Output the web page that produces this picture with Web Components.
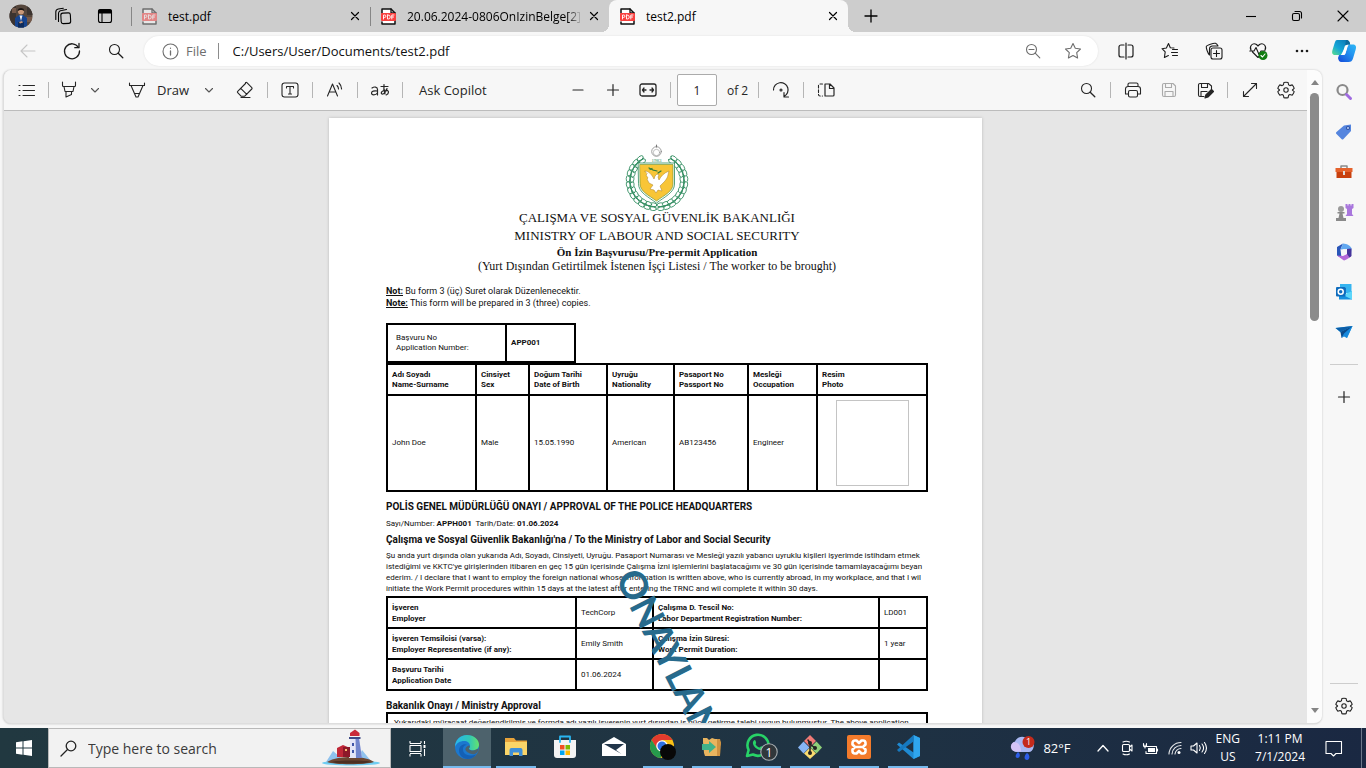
<!DOCTYPE html>
<html lang="en">
<head>
<meta charset="utf-8">
<title>test2.pdf</title>
<style>
  html, body { margin: 0; height: 100%; overflow: hidden; }
  body { font-family: "Open Sans", "Noto Sans", sans-serif; font-size: 12px; color: #1b1b1b; background: #f7f7f7; }
</style>
</head>
<body>
<browser-desktop></browser-desktop>
<script>
const S = (w, h, body, extra = '') => `<svg width="${w}" height="${h}" viewBox="0 0 ${w} ${h}" fill="none" stroke="currentColor" stroke-width="1.1" stroke-linecap="round" stroke-linejoin="round" aria-hidden="true" ${extra}>${body}</svg>`;

// Pairs of leaves along both sides of the emblem's wreath, from the bottom up.
const wreath = () => {
  let out = '';
  for (let i = 0; i < 12; i++) {
    for (const side of [-1, 1]) {
      const deg = 8 + i * 12.4;
      const t = Math.PI / 180 * deg;
      const x = 32 + side * 27 * Math.sin(t);
      const y = 37 + 26 * Math.cos(t);
      out += `<g transform="translate(${x.toFixed(1)} ${y.toFixed(1)}) rotate(${(-side * deg).toFixed(0)})"><ellipse cx="0" cy="-2" rx="3.500" ry="1.900" fill="#fff"/><ellipse cx="0" cy="2" rx="3.500" ry="1.900" fill="#fff"/><path d="M-3 0H3"/></g>`;
    }
  }
  return out;
};

const gear = '<path d="M9 1.2c.8 0 1.500.1 2.100.3l.5 2.300 1.300.8 2.300-.7c.9 1 1.600 2.200 2 3.500L15.400 9l0 .2 1.800 1.500c-.4 1.300-1.100 2.500-2 3.500l-2.300-.7-1.300.8-.5 2.300c-1.400.4-2.800.4-4.200 0l-.5-2.300-1.300-.8-2.300.7c-.9-1-1.600-2.200-2-3.500L2.600 9 .8 7.400c.4-1.300 1.100-2.500 2-3.500l2.300.7 1.300-.8.5-2.300C7.500 1.300 8.200 1.200 9 1.200z"/><circle cx="9" cy="9" r="2.200"/>';
const pdf = '<path d="M1 5V1h9l4 4v11H1v-2" fill="#fff" stroke="#111" stroke-width="1.500"/><path d="M10 1v4h4" stroke="#111" stroke-width="1.300"/><rect x="0" y="5" width="15" height="8" rx="1" fill="#f8403f" stroke="none"/><path d="M2.500 11V7h1.200a1.100 1.100 0 0 1 0 2.400H2.500M6.500 7v4h.8a2 2 0 0 0 0-4zM10.800 11V7h2.200M10.800 9h1.800" stroke="#fff" stroke-width=".9"/>';

const ICONS = {
  avatar: S(24, 24, '<defs><clipPath id="c"><circle cx="12" cy="12" r="11.500"/></clipPath></defs><g clip-path="url(#c)" stroke="none"><path fill="#55463c" d="M0 0h24v24H0z"/><path fill="#3c3430" d="M0 0h7v24H0zM18 2h6v9h-6z"/><path fill="#75594a" d="M3 4h4v5H3zM17 13h6v5h-6z"/><path fill="#16448f" d="M6 24V14l4-3h4l4 3v10z"/><path fill="#0d2b5c" d="M9 18h6v6H9z"/><path fill="#e8eef7" d="M10.500 11.500h3L12 17z"/><circle cx="12" cy="7.500" r="3" fill="#c99878"/><path fill="#1a1513" d="M8.800 7C8 3 16 3 15.200 7c-1.500-1.500-5-1.500-6.400 0z"/><path fill="#c99878" d="M10 18l3-1 1 1.500-3 1z"/></g>'),
  workspaces: S(18, 18, '<rect x="7" y="6" width="9.500" height="10.500" rx="2" transform="rotate(-3 12 11)"/><path d="M4.500 14.500V6.500a3 3 0 0 1 3-3l5-1M1.800 12.500V5a3 3 0 0 1 2.500-3l5-.8"/>'),
  tabActions: S(16, 16, '<rect x="1.500" y="1.500" width="13" height="13" rx="2"/><path d="M2 2h12v3H2z" fill="currentColor"/><path d="M5 5v9"/>'),
  pdf: S(15, 17, pdf),
  pdfDim: S(15, 17, pdf, 'opacity=".5"'),
  x: S(10, 10, '<path d="M1.500 1.500l7 7M8.500 1.500l-7 7" stroke-width="1.200"/>'),
  plus: S(14, 14, '<path d="M7 1v12M1 7h12" stroke-width="1.300"/>'),
  plusSmall: S(12, 12, '<path d="M6 .5v11M.5 6h11" stroke-width="1.200"/>'),
  minus: S(12, 12, '<path d="M1 6h10" stroke-width="1.200"/>'),
  winMin: S(10, 10, '<path d="M0 5.500h10" stroke-linecap="butt"/>'),
  winRestore: S(10, 10, '<rect x=".5" y="2.500" width="7" height="7" rx="1.500"/><path d="M3 .5h4.500a2 2 0 0 1 2 2V7"/>'),
  winClose: S(10, 10, '<path d="M0 0l10 10M10 0L0 10"/>'),
  back: S(16, 14, '<path d="M15 7H1M7 1L1 7l6 6"/>'),
  refresh: S(18, 18, '<path d="M15.500 5.500A7.500 7.500 0 1 0 16.500 9" stroke-width="1.300"/><path d="M16 1.500v4.200h-4.200" stroke-width="1.300"/>'),
  search: S(16, 16, '<circle cx="6.500" cy="6.500" r="5"/><path d="M10.200 10.200l4.600 4.600" stroke-width="1.300"/>'),
  info: S(17, 17, '<circle cx="8.500" cy="8.500" r="7.500"/><path d="M8.500 8v4M8.500 5.200v.1" stroke-width="1.300"/>'),
  zoomOut: S(16, 16, '<circle cx="6.500" cy="6.500" r="5"/><path d="M10.200 10.200l4.600 4.600M4 6.500h5"/>'),
  star: S(18, 18, '<path d="M9 1.500l2.300 4.800 5.200.7-3.800 3.700.9 5.300L9 13.500 4.400 16l.9-5.300L1.500 7l5.200-.7z"/>'),
  split: S(18, 18, '<path d="M7 3H4a2 2 0 0 0-2 2v8a2 2 0 0 0 2 2h3M11 3h3a2 2 0 0 1 2 2v8a2 2 0 0 1-2 2h-3M9 1v16" stroke-width="1.200"/>'),
  favorites: S(18, 18, '<path d="M13 6l-3.700-.3L7.500 1.500 5.400 6 1 6.700l3.200 3.200-.8 5.600 4-2M11.500 7.500h5M10.500 10.500h6M11.500 13.500h5"/>'),
  collections: S(18, 18, '<rect x="6" y="6" width="11" height="11" rx="2"/><path d="M11.500 8.500v6M8.500 11.500h6M4.500 13C2.800 11.500 1 6 1.300 4.500S9 .8 10.500 1.300 12.500 3 13 4M4.500 13V7a3 3 0 0 1 3-3H13"/>'),
  essentials: S(19, 18, '<path d="M2 8C0 4.500 3.500 0 7.500 2.500L9 4l1.500-1.500C14.500 0 18 4.500 16 8M3.500 10L9 15.500l2-2M.8 9H5l2-3.500 3 7L12 9h4"/><circle cx="14" cy="13.500" r="4.500" fill="#107c10" stroke="none"/><path d="M12 13.500l1.500 1.500 2.500-3" stroke="#fff"/>'),
  dots: S(14, 4, '<g fill="currentColor" stroke="none"><circle cx="2" cy="2" r="1.300"/><circle cx="7" cy="2" r="1.300"/><circle cx="12" cy="2" r="1.300"/></g>'),
  copilot: S(24, 24, '<defs><linearGradient id="a" x1="0" y1="1" x2="1" y2="0"><stop stop-color="#5ee08a"/><stop offset=".4" stop-color="#14a6d8"/><stop offset="1" stop-color="#0a6fae"/></linearGradient><linearGradient id="b" x1="0" y1="1" x2="1" y2="0"><stop stop-color="#1447d8"/><stop offset=".6" stop-color="#2394f0"/><stop offset="1" stop-color="#2fb9f5"/></linearGradient></defs><g stroke="none"><path fill="url(#b)" d="M7 16h4c1.500 0 2.300-1 2.800-2.500L15.500 8c.5-1.700 1.300-2.500 3-2.500H21c3 0 3.500 2.500 2.700 5l-2.700 9c-.7 2.500-2 3.500-4.500 3.500H9.500C7 23 6.500 21 6 19z"/><path fill="url(#a)" d="M5 1h9c3 0 3.500 1.500 4.200 4.500h-2.700c-1.500 0-2.500.7-3 2.500l-1.700 6c-.5 1.500-1.300 2-2.800 2H3c-3 0-3.300-2.500-2.500-5l2-6.500C3.200 2 4 1 5 1z"/><path fill="#0b6a9d" d="M14 1c3 0 3.500 1.500 4.200 4.500h-2.700l-2.300 1z"/><path fill="#fff" d="M14 6.500h1.600l-2.400 8.400c-.3.800-1 1.100-1.800 1.100H9z"/></g>'),
  list: S(17, 13, '<path d="M5 1.500h11.500M5 6.500h11.500M5 11.500h11.500M1 1.500h1M1 6.500h1M1 11.500h1"/>'),
  highlighter: S(16, 18, '<path d="M1.500 1v3.500a1 1 0 0 0 1 1h11a1 1 0 0 0 1-1V1M3 5.500l1 5h8l1-5M5 10.500V16l5.500-2.500v-3"/>'),
  pen: S(18, 18, '<path d="M1.500 2v2.500h15V2M3 4.500L8 16h2l5-11.500M6.500 12.500h5"/>'),
  chevron: S(10, 10, '<path d="M1.500 3.500L5 7l3.500-3.500" stroke="#555"/>'),
  eraser: S(18, 18, '<path d="M9.500 2.500l-7.800 7.800a1 1 0 0 0 0 1.400l3.600 3.600h3.200l7.300-7.300a1 1 0 0 0 0-1.400l-4.900-4.900a1 1 0 0 0-1.400 0zM4.700 7.300l6.100 6.100M5 16.500h9"/>'),
  textBox: S(18, 16, '<rect x="1" y="1" width="16" height="14" rx="2.500"/><path d="M5.500 6V4.500h7V6M9 4.500v7.500M7.500 12h3"/>'),
  readAloud: S(18, 16, '<path d="M1.500 14L6.500 2l5 12M3.200 10h6.600M11 3.500c1 1 1.500 2 1.500 3.500M13 1c1.800 1.800 2.600 3.500 2.600 6"/>'),
  translate: S(20, 16, '<path d="M2 6c2-1.500 5.500-1.500 5.500 1.500V13M7.500 9C4 8.500 1.500 9 1.500 11c0 2.500 4 2.500 6 0M11 4.500h7M14 2.500c-.5 4 0 7 1 9.500M17 6.500c-1 4-3.500 6-5 5.500-2-1 .5-4 4-4 3.500.5 3 4 .2 5" stroke-width="1.200"/>'),
  fit: S(18, 14, '<rect x="1" y="1" width="16" height="12" rx="2" stroke-width="1.300"/><path d="M7 7H3.500M11 7h3.500M5 5L3.500 7 5 9M13 5l1.500 2L13 9" stroke-width="1.300"/>'),
  rotate: S(18, 18, '<path d="M1.500 9A7.300 7.300 0 1 1 12 15.500M12 11.500v4.500h4.500" stroke-width="1.200"/><circle cx="9" cy="9" r="1"/>'),
  pages: S(18, 14, '<path d="M8 1v12M8 1h5l4 4v7a1 1 0 0 1-1 1H8M12.500 1v4.500H17" stroke-width="1.200"/><path d="M5.500 1H3a1.500 1.500 0 0 0-1.500 1.500v9A1.500 1.500 0 0 0 3 13h2.500" stroke-dasharray="2.500 2"/>'),
  print: S(18, 16, '<path d="M4 4.500v-2A1.500 1.500 0 0 1 5.500 1h7A1.500 1.500 0 0 1 14 2.500v2M4 12H1.500V7A2.500 2.500 0 0 1 4 4.500h10A2.500 2.500 0 0 1 16.500 7v5H14"/><rect x="4.500" y="8.500" width="9" height="6.500" rx="1.500"/>'),
  save: S(16, 16, '<path d="M1.500 3A1.500 1.500 0 0 1 3 1.500h9L14.500 4v9a1.500 1.500 0 0 1-1.500 1.500H3A1.500 1.500 0 0 1 1.500 13zM4.500 1.500v4h6v-4M4 14.500v-5h8v5"/>'),
  saveAs: S(17, 17, '<path d="M7 14.500H3A1.500 1.500 0 0 1 1.500 13V3A1.500 1.500 0 0 1 3 1.500h8.500L14.500 4v4M4.500 1.500v4h6v-4M4 14.500v-5h6"/><path d="M14.500 7.500l2 2-5.500 5.500-3 1 .8-3z" fill="currentColor"/>'),
  expand: S(16, 16, '<path d="M1.500 14.500l13-13M9.500 1.500h5v5M1.500 9.500v5h5"/>'),
  gear: S(18, 18, gear),
  sideSearch: S(18, 18, '<circle cx="7.500" cy="7" r="5" stroke="#8a8a8a" stroke-width="2.200"/><path d="M11.500 11.500l4 4" stroke="#a06be0" stroke-width="3"/>'),
  tag: S(18, 18, '<path d="M9 2.500L16 1.500v6.500L8.500 16c-.7.700-1.300.7-2 0L1.500 11c-.7-.7-.7-1.300 0-2z" fill="#5585de" stroke="none"/><circle cx="13" cy="5" r="1.500" fill="#c8dcff" stroke="#2a4fa5"/>'),
  tools: S(18, 16, '<path d="M6 4V2h6v2" stroke="#8a8a8a" stroke-width="1.500"/><path fill="#e5622c" stroke="none" d="M.5 4h17v4H.5z"/><path fill="#c8400e" stroke="none" d="M1.500 8h15v6h-15z"/><path fill="#ddd" stroke="none" d="M8 7h2v4H8z"/>'),
  games: S(19, 19, '<g stroke="none"><path fill="#a977dd" d="M10.500 1h2v1.500h1V1h2v1.500h1V1h2v4l-1.500 1v5l1.500 2h-8l1.500-2V6l-1.500-1z"/><circle cx="6" cy="6" r="3" fill="#9a9a9a"/><path fill="#8a8a8a" d="M2.500 9h7v1.500h-2L8.500 15H11v3H1v-3h2.500l1-4.500h-2z"/></g>'),
  m365: S(18, 18, '<g stroke="none"><path fill="#2a56b8" d="M8 .5L2 4v8.500L6.500 15 5.500 6.500z"/><path fill="#62a8f0" d="M8 .5c4 0 8.500 3 8.500 5L16 10l-4-4-6.500.5z"/><path fill="#b468d8" d="M2 12.500l6.500 4.800c1.500.5 4-1.300 7.500-3.800V6l-4 0v5l-4 2z"/><path fill="#45349b" d="M16.500 5.500V13l-2 1.500L12 11V6z"/><path fill="#f7f7f7" d="M9 6l3 1.600v3L9 12.300l-3-1.600v-3z"/></g>'),
  outlook: S(18, 18, '<g stroke="none"><path fill="#35b4f0" d="M5 1h11.500v9H5z"/><path fill="#1470c4" d="M5 5h6v6H5z"/><path fill="#1490df" d="M4 16.500h13V8l-6.500 4L4 9z"/><path fill="#5cd6fa" d="M17 8v8.500L8 12z"/><rect x="1" y="4" width="9.500" height="9.500" rx="1" fill="#0f6cbd"/></g><circle cx="5.700" cy="8.700" r="2.500" stroke="#fff" stroke-width="1.500"/>'),
  plane: S(18, 16, '<g stroke="none"><path fill="#2aa5ec" d="M.5 4L17.500 2 12 14z"/><path fill="#0c5ea8" d="M.5 4l17-2L5.500 8z"/><path fill="#0a4a8c" d="M5.500 8L17.500 2 6.500 14z"/><path fill="#1688dc" d="M6.500 14l2.500-4.500L17.500 2 12 14l-3-1.500z"/></g>'),
  start: S(16, 16, '<path fill="#fff" stroke="none" d="M0 2.300l6.500-1v6.300H0zM7.500 1.200L16 0v7.600H7.500zM0 8.500h6.500v6.300L0 13.800zM7.500 8.500H16V16l-8.500-1.200z"/>'),
  winSearch: S(17, 17, '<circle cx="11" cy="6" r="4.800" stroke-width="1.300"/><path d="M7.500 9.500L1 16" stroke-width="1.300"/>'),
  lighthouse: S(60, 38, '<g stroke="none"><ellipse cx="30" cy="34" rx="29" ry="2.500" fill="#6fcdf2"/><path fill="#8fc2ee" d="M5 33l7-11 7 6 3 5zM37 30l4-9 9 11z"/><path fill="#6b4632" d="M6 33c6-4 16-5 24-5s18 1 23 5c-8 3-40 3-47 0z"/><path fill="#4c3023" d="M10 33c8-2 35-2 40 0-8 2-32 2-40 0z"/><path fill="#e4e6f8" d="M29.500 9h8.500l3 20H28z"/><path fill="#7185cd" d="M34.500 9H38l3 20h-6z"/><path fill="#3f55a8" d="M31 14h2v3h-2zM31 21h2v3h-2z"/><path fill="#c92b39" d="M29 4l5-3.500L38.500 4v3H29z"/><path fill="#3e4a86" d="M28 8h11.500v2H28z"/><path fill="#c02737" d="M16 19l6-3 7 3v9H16z"/><path fill="#8d1829" d="M22 18h7v10h-7z"/><path fill="#ffc070" d="M24 20h2v2h-2z"/></g>'),
  taskView: S(17, 17, '<path d="M1 3.500V1M12 1v2M1 3.500h11M1 14v2.500M12 14v2.500M1 13.500h11M1 5.500h11v6H1zM15.500 1v3M15.500 9v7" stroke-linecap="butt"/><rect x="14.500" y="5" width="2" height="3" fill="#fff" stroke="none"/>'),
  edge: S(24, 24, '<defs><linearGradient id="a" x1="0" x2="1"><stop stop-color="#28b7ee"/><stop offset=".6" stop-color="#31c7b6"/><stop offset="1" stop-color="#66e36b"/></linearGradient></defs><g stroke="none"><circle cx="12" cy="12" r="12" fill="#1b78cf"/><path fill="url(#a)" d="M0 12C0 5 5 0 12 0s12 5 12 9.500c0 4-3 6-6 6-2.500 0-4-1-4-1.700 0-.6 1-1 1-2.800C15 8 12.500 6 9 6 5 6 1.500 8 0 12z"/><path fill="#1460b5" d="M8 14.500C8 11 10 10 12 9.700c-3-1.700-8 .5-8 5.800C4 20 8 24 12.500 24c3.500 0 7-2 8.700-4.800C15 22 8 20 8 14.500z"/><path fill="#4d626c" d="M14.500 10.500c1 2-1 2.500-.5 3.500.8 1.800 4.500 2 7 .5l2.500-.8C23 20 17 20 14 18c-3-1.500-4-3-3.500-4.500s2-3 4-3z"/></g>'),
  folder: S(22, 20, '<g stroke="none"><path fill="#e8a33a" d="M0 1h9l2 2.500h11V18H0z"/><path fill="#fbd568" d="M0 5h22v13H0z"/><path fill="#3f8fd8" d="M4.500 19v-6a2 2 0 0 1 2-2h9a2 2 0 0 1 2 2v6H14v-3.500H8V19z"/></g>'),
  store: S(24, 24, '<g stroke="none"><path fill="#f3f3f3" d="M1 5h22v15a3 3 0 0 1-3 3H4a3 3 0 0 1-3-3z"/><path fill="#f25022" d="M7 10h4.500v4.500H7z"/><path fill="#7fba00" d="M12.500 10H17v4.500h-4.500z"/><path fill="#00a4ef" d="M7 15.500h4.500V20H7z"/><path fill="#ffb900" d="M12.500 15.500H17V20h-4.500z"/></g><path d="M7 7V1.500h10V7" stroke="#29b5f0" stroke-width="1.800"/>'),
  mail: S(24, 20, '<path fill="#fff" stroke="none" d="M0 7L12 0l12 7v12H0z"/><path fill="#22364a" stroke="none" d="M2 7h20l-8 6 5.500 4z"/>'),
  chrome: S(26, 26, '<g stroke="none"><circle cx="12" cy="12" r="12" fill="#fbc116"/><path fill="#e33b2e" d="M1.600 6A12 12 0 0 1 22.400 6H12L7 15z"/><path fill="#269a4c" d="M1.600 6L8 16l5 2-2.500 6A12 12 0 0 1 1.600 6z"/><circle cx="12" cy="12" r="5.800" fill="#fff"/><circle cx="12" cy="12" r="4.500" fill="#2f72e4"/><circle cx="18" cy="18" r="8" fill="#080808"/></g>'),
  transfer: S(20, 20, '<g stroke="none"><path fill="#e9b45f" d="M1 5V1h4l2 2 3-2 3 1h4l2 4-1 3v10H3l-1-3z"/><path fill="#cf9241" d="M15 2h3l1 4-1 13h-3z"/><path fill="#40b28a" d="M0 7h7V4l7 6-7 6v-3H0z"/></g>'),
  whatsapp: S(32, 28, '<path d="M2 23l1.600-6A10.500 10.500 0 1 1 8 21.500z" stroke="#27d367" stroke-width="2.600"/><path d="M8.500 8c1-2 2-1 2.500 1s-1 1.500 0 3 2.500 2.500 3.500 2.500 1-1.500 2-1.200 2.500 1 2 2.200c-1 2-4 2-7 0s-4.500-5.500-3-7.500z" fill="#27d367" stroke="none"/><circle cx="24" cy="19" r="8.200" fill="#30373b" stroke="#aab0b4"/><text x="24" y="23.500" fill="#fff" stroke="none" font-size="12" text-anchor="middle">1</text>'),
  git: S(24, 24, '<g stroke="none"><path fill="#f07a76" d="M12 0l6 6-6 6-6-6z"/><path fill="#87b5f5" d="M5.500 6.500l6 6-6 6-5.500-6z"/><path fill="#8fd07a" d="M18.500 6.500l5.500 6-5.500 6-6-6z"/><path fill="#fbdc70" d="M12 12.500l6 6-6 5.500-6-5.500z"/></g><path d="M10 5l2 3v10M12 9l5 4" stroke="#222" stroke-width="1.500"/><g fill="#222" stroke="none"><circle cx="12" cy="8" r="2"/><circle cx="12" cy="18" r="2"/><circle cx="17" cy="13" r="2"/></g>'),
  xampp: S(24, 24, '<rect width="24" height="24" rx="2" fill="#f47b2b" stroke="none"/><path d="M8 5.500h1.500L12 8l2.500-2.500H16a2.500 2.500 0 0 1 2.500 2.500v1.500L16 12l2.500 2.500V16a2.500 2.500 0 0 1-2.500 2.500h-1.500L12 16l-2.500 2.500H8A2.500 2.500 0 0 1 5.500 16v-1.500L8 12 5.500 9.500V8A2.500 2.500 0 0 1 8 5.500zM9.500 12h5" stroke="#fff" stroke-width="2.600"/>'),
  vscode: S(24, 24, '<g stroke="none"><path fill="#1f8ad2" d="M17.500 0L24 3v18l-6.500 3L1 9.500l2-2 14.500 10z"/><path fill="#2fa6ee" d="M17.500 0L24 3v18l-6.500 3z"/><path fill="#1679bf" d="M17.500 6.500L3 17l-2-2L17.500 0z"/></g>'),
  weather: S(26, 26, '<g stroke="none"><path fill="#aab8f3" d="M6 17a5.500 5.500 0 0 1-1-10.500C7 1 15 0 18 5c5 0 6.500 4 5.500 7.500C23 15 21 17 19 17z"/><path fill="#d4c3f6" d="M5 16.500A5 5 0 0 1 3 7.500c5-1 8 3 8 9z"/><path fill="#2d5ee8" d="M8 17c3 2 2 6-.5 6S5 20 8 17zM17 18c3.500 2 3 7 0 7s-3.500-4 0-7z"/><circle cx="18.500" cy="7" r="6" fill="#c42b1c"/><text x="18.500" y="10" fill="#fff" font-size="9" text-anchor="middle">1</text></g>'),
  up: S(12, 8, '<path d="M1 7l5-5.500L11 7" stroke-width="1.300"/>'),
  camera: S(12, 16, '<rect x="1.500" y="4.500" width="7" height="7" rx="1"/><path d="M8.500 7L11 5v6L8.500 9M2 2c2-1 4.500-1 6.500 0M2 14c2 1 4.500 1 6.500 0"/>'),
  battery: S(17, 13, '<path d="M5 4.500h9.500v7H4v-2M15.500 7v2M3 6V3M1.500 1.500v2a1.500 1.500 0 0 0 3 0v-2"/><path fill="#fff" stroke="none" d="M6 6h7v4H6z"/>'),
  wifi: S(14, 14, '<path d="M1 13A12 12 0 0 1 13 1.500M4 13A9 9 0 0 1 13 4.500M7 13a6 6 0 0 1 6-5.500" opacity=".9"/><circle cx="11" cy="11.500" r="1.500" fill="#fff" stroke="none"/>'),
  sound: S(17, 14, '<path d="M1 5h2.500L7 2v10L3.500 9H1zM9.500 4.500c1 1.500 1 3.500 0 5M12 3c2 2.500 2 5.500 0 8M14.500 1.500c2.500 3.500 2.500 7.500 0 11"/>'),
  notif: S(18, 17, '<path d="M1 1.500h15.500v12H11L8.500 16 6 13.500H1z"/>'),
  emblem: S(64, 68, `<g stroke="#2c8a5c" stroke-width=".8">${wreath()}</g><circle cx="31.500" cy="7.500" r="4.800" stroke="#888" stroke-width=".8" fill="#fff"/><circle cx="31.500" cy="8.500" r="3.200" stroke="#999" stroke-width=".6"/><path d="M31.500 1v2" stroke="#777"/><text x="31.500" y="18" font-size="5" text-anchor="middle" fill="#2c8a5c" stroke="none">1983</text><path d="M13.500 19h36v21c0 8.500-10 13-18 19-8-6-18-10.500-18-19z" fill="#fff" stroke="#2c8a5c" stroke-width=".8"/><path d="M15 20.500h33V40c0 7.500-9 11.500-16.500 17C24 51.500 15 47.500 15 40z" fill="#f8c537" stroke="#5f8f2f" stroke-width=".6"/><path d="M20 27c4 0 7 4 9 8l1-3 2-2 2 1-1 2 1 3c2-4 5-7 10-9-1 3-1 5-2 7l-2 3-3 3-2 2 2 5-4-1-2 3-2-3-4-1 3-4-4-2-2-4 1-1-2-3 1-1z" fill="#fff" stroke="#a8802a" stroke-width=".5"/><path d="M24 24l4 2M28 26l4 1M33 29l3-2M25 25.500l2-1" stroke="#2a7a3a" stroke-width="1.200"/>`)
};

const define = (tag, css, html) => customElements.define(tag, class extends HTMLElement {
  constructor() {
    super();
    const t = document.createElement('template');
    t.innerHTML = `<style>*{box-sizing:border-box}${css}</style>${html}`;
    this.attachShadow({ mode: 'open' }).append(t.content.cloneNode(true));
  }
});

customElements.define('ui-icon', class extends HTMLElement {
  connectedCallback() {
    if (this.shadowRoot) return;
    this.attachShadow({ mode: 'open' }).innerHTML =
      `<style>:host{display:inline-flex;align-items:center;justify-content:center;flex:none}svg{display:block;overflow:visible}</style>${ICONS[this.getAttribute('name')]}`;
  }
});

customElements.define('icon-button', class extends HTMLElement {
  connectedCallback() {
    if (this.shadowRoot) return;
    this.attachShadow({ mode: 'open' }).innerHTML =
      `<style>:host{display:inline-flex;flex:none;width:24px;height:24px}button{all:unset;box-sizing:border-box;display:flex;align-items:center;justify-content:center;width:100%;height:100%}</style>
       <button aria-label="${this.getAttribute('label')}"><ui-icon name="${this.getAttribute('icon')}"></ui-icon></button>`;
  }
});

customElements.define('browser-tab', class extends HTMLElement {
  connectedCallback() {
    if (this.shadowRoot) return;
    const on = this.hasAttribute('active');
    this.attachShadow({ mode: 'open' }).innerHTML = `<style>
      *{box-sizing:border-box}
      :host{display:flex;align-items:center;flex:0 1 239px;min-width:0;height:32px;padding:0 5px 0 10px;border-left:1px solid transparent;position:relative}
      :host([active]){background:#f7f7f7;border-radius:8px 8px 0 0}
      :host(:not([active]))::before{content:"";position:absolute;left:-1px;top:7px;width:1px;height:19px;background:#868686}
      :host([active])::before,:host([active])::after{content:"";position:absolute;bottom:0;width:8px;height:8px}
      :host([active])::before{left:-9px;background:radial-gradient(circle at 0 0,transparent 8px,#f7f7f7 8px)}
      :host([active])::after{right:-8px;background:radial-gradient(circle at 100% 0,transparent 8px,#f7f7f7 8px)}
      button{all:unset;display:flex;align-items:center;gap:11px;flex:1;min-width:0;height:100%}
      .t{flex:1;overflow:hidden;white-space:nowrap;margin-right:2px}
      :host([fade]) .t{-webkit-mask-image:linear-gradient(90deg,#000 92%,transparent)}
      icon-button{width:20px}
    </style><button role="tab" aria-selected="${on}"><ui-icon name="${this.getAttribute('icon')}"></ui-icon><span class="t"><slot></slot></span></button><icon-button icon="x" label="Close tab"></icon-button>`;
  }
});

define('tab-strip', `
  :host{display:flex;height:32px;background:#cdcdcd;align-items:center;color:#000}
  .lead{display:flex;align-items:center;gap:18px;padding:0 15px 0 9px;width:131px;flex:none}
  nav{display:flex;flex:0 1 718px;min-width:0}
  .new{margin-left:10px}
  .win{display:flex;margin-left:auto}
  .win icon-button{width:46px}`,
  `<div class="lead"><icon-button icon="avatar" label="Profile"></icon-button><icon-button icon="workspaces" label="Workspaces"></icon-button><icon-button icon="tabActions" label="Tab actions"></icon-button></div>
  <nav role="tablist"><browser-tab icon="pdfDim">test.pdf</browser-tab><browser-tab icon="pdf" fade>20.06.2024-0806OnIzinBelge[2].p</browser-tab><browser-tab icon="pdf" active>test2.pdf</browser-tab></nav>
  <icon-button class="new" icon="plus" label="New tab"></icon-button>
  <div class="win"><icon-button icon="winMin" label="Minimize"></icon-button><icon-button icon="winRestore" label="Restore"></icon-button><icon-button icon="winClose" label="Close"></icon-button></div>`);

define('address-bar', `
  :host{display:flex;align-items:center;height:38px;padding:0 10px 0 16px}
  .nav{display:flex;gap:20px;margin-right:16px}
  .pill{display:flex;align-items:center;flex:1;min-width:0;height:30px;border-radius:15px;background:#fff;padding:0 13px 0 14px;color:#6e6e6e;box-shadow:0 0 2px #ddd;font-size:13px}
  .file{margin:0 11px 0 4px}
  .sep{width:1px;height:16px;background:#8c8c8c;margin-right:14px}
  input{all:unset;flex:1;min-width:0;font:13px "Open Sans",sans-serif;color:#111}
  .in{display:flex;gap:16px}
  .r{display:flex;gap:20px;margin-left:16px}
  .dis{color:#c6c6c6}
  .cp{margin-left:-2px}`,
  `<div class="nav"><icon-button class="dis" icon="back" label="Back"></icon-button><icon-button icon="refresh" label="Refresh"></icon-button><icon-button icon="search" label="Search"></icon-button></div>
  <div class="pill"><icon-button icon="info" label="Site information"></icon-button><span class="file">File</span><span class="sep"></span><input aria-label="Address" value="C:/Users/User/Documents/test2.pdf"><span class="in"><icon-button icon="zoomOut" label="Zoom"></icon-button><icon-button icon="star" label="Add to favorites"></icon-button></span></div>
  <div class="r"><icon-button icon="split" label="Split screen"></icon-button><icon-button icon="favorites" label="Favorites"></icon-button><icon-button icon="collections" label="Collections"></icon-button><icon-button icon="essentials" label="Browser essentials"></icon-button><icon-button icon="dots" label="Settings and more"></icon-button><icon-button class="cp" icon="copilot" label="Copilot"></icon-button></div>`);

define('pdf-toolbar', `
  :host{display:flex;align-items:center;height:41px;border-bottom:1px solid #bcbcbc;background:#f7f7f7;padding:0 9px 0 10px;font-size:13px;color:#262626}
  div{display:flex;align-items:center;flex:none}
  .s{width:1px;height:16px;background:#b5b5b5;margin:0 10px;flex:none}
  .s1{margin-right:8px}
  .c{width:12px;margin:0 24px 0 8px}
  .w{margin:0 14px 0 8px}
  .c2{margin:0 18px 0 0}
  button{all:unset;white-space:nowrap}
  button.w{margin:0 14px 0 8px}
  button.ask{margin-left:6px}
  .g1{flex:1}.g3{flex:3}
  .z{gap:11px}
  .dis{color:#aaa}
  input{width:40px;height:32px;border:1px solid #ababab;border-radius:2px;background:#fff;text-align:center;font:12px "Open Sans",sans-serif;color:#222;padding:0;margin:0 10px 0 -4px}
  .of{font-size:12px}
  .r .n{margin-right:12px}`,
  `<div><icon-button icon="list" label="Contents"></icon-button><span class="s s1"></span><icon-button icon="highlighter" label="Highlight"></icon-button><icon-button class="c" icon="chevron" label="Highlight options"></icon-button><icon-button icon="pen" label="Pen"></icon-button><button class="w">Draw</button><icon-button class="c c2" icon="chevron" label="Draw options"></icon-button><icon-button icon="eraser" label="Erase"></icon-button><span class="s"></span><icon-button icon="textBox" label="Add text"></icon-button><span class="s"></span><icon-button icon="readAloud" label="Read aloud"></icon-button><span class="s"></span><icon-button icon="translate" label="Translate"></icon-button><span class="s"></span><button class="ask">Ask Copilot</button></div>
  <span class="g1"></span>
  <div><div class="z"><icon-button icon="minus" label="Zoom out"></icon-button><icon-button icon="plusSmall" label="Zoom in"></icon-button><icon-button icon="fit" label="Fit to width"></icon-button></div><span class="s"></span><input aria-label="Page number" value="1"><span class="of">of 2</span><span class="s"></span><icon-button icon="rotate" label="Rotate"></icon-button><span class="s"></span><icon-button icon="pages" label="Page view"></icon-button></div>
  <span class="g3"></span>
  <div class="r"><icon-button icon="search" label="Find"></icon-button><span class="s"></span><icon-button class="n" icon="print" label="Print"></icon-button><icon-button class="n dis" icon="save" label="Save"></icon-button><icon-button icon="saveAs" label="Save as"></icon-button><span class="s"></span><icon-button class="n" icon="expand" label="Full screen"></icon-button><icon-button icon="gear" label="Settings"></icon-button></div>`);

define('pdf-page', `
  :host{display:block;position:relative;width:653px;padding:26px 54px 0 57px;background:#fff;color:#111;font:9px/12px Roboto,sans-serif;box-shadow:0 0 3px #bbb;overflow:hidden}
  header{text-align:center;font-family:"Liberation Serif",serif;white-space:nowrap;margin-bottom:12px}
  header ui-icon{display:flex;margin-bottom:-3px}
  .t1{font-size:13px;line-height:18px}
  .t2{font-size:11px;line-height:14px;font-weight:700}
  .t3{font-size:12px;line-height:14px}
  p{margin:0}
  u{font-weight:700}
  table{border-collapse:collapse;table-layout:fixed;width:542px;font-size:8px;line-height:10px;margin-bottom:9px}
  td,th{border:2px solid #000;padding:0 4px;text-align:left;vertical-align:middle}
  .app{width:188px;margin:14px 0 0}
  .app td{height:38px}
  .app td:first-child{padding-left:8px}
  .main tr:first-child{height:31px}
  .main tr:last-child{height:96px}
  .ph{width:73px;height:86px;border:1px solid #c4c4c4;margin:0 auto}
  h2{margin:0;font-size:10px;line-height:12px}
  .n{font-size:8px;line-height:10px;margin:6px 0 5px}
  .d{line-height:11px;font-size:8px;white-space:nowrap;margin:4px 0 2px}
  .emp tr{height:31px}
  .emp{line-height:11px}
  .emp th,.last{white-space:nowrap}
  .last td{height:60px;padding:4px 6px;vertical-align:top}
  .stamp{position:absolute;left:299px;top:434px;font:700 38px/38px Lato,sans-serif;color:#276a8c;transform-origin:0 50%;transform:rotate(63deg)}`,
  `<header><ui-icon name="emblem"></ui-icon><div class="t1">ÇALIŞMA VE SOSYAL GÜVENLİK BAKANLIĞI</div><div class="t1">MINISTRY OF LABOUR AND SOCIAL SECURITY</div><div class="t2">Ön İzin Başvurusu/Pre-permit Application</div><div class="t3">(Yurt Dışından Getirtilmek İstenen İşçi Listesi / The worker to be brought)</div></header>
  <p><u>Not:</u> Bu form 3 (üç) Suret olarak Düzenlenecektir.</p><p><u>Note:</u> This form will be prepared in 3 (three) copies.</p>
  <table class="app"><colgroup><col style="width:119px"><col style="width:69px"></colgroup><tr><td>Başvuru No<br>Application Number:</td><td><b>APP001</b></td></tr></table>
  <table class="main"><colgroup><col style="width:89px"><col style="width:53px"><col style="width:78px"><col style="width:67px"><col style="width:74px"><col style="width:69px"><col></colgroup>
  <tr><th>Adı Soyadı<br>Name-Surname</th><th>Cinsiyet<br>Sex</th><th>Doğum Tarihi<br>Date of Birth</th><th>Uyruğu<br>Nationality</th><th>Pasaport No<br>Passport No</th><th>Mesleği<br>Occupation</th><th>Resim<br>Photo</th></tr>
  <tr><td>John Doe</td><td>Male</td><td>15.05.1990</td><td>American</td><td>AB123456</td><td>Engineer</td><td><div class="ph"></div></td></tr></table>
  <h2>POLİS GENEL MÜDÜRLÜĞÜ ONAYI / APPROVAL OF THE POLICE HEADQUARTERS</h2>
  <p class="n">Sayı/Number: <b>APPH001</b>&nbsp; Tarih/Date: <b>01.06.2024</b></p>
  <h2>Çalışma ve Sosyal Güvenlik Bakanlığı'na / To the Ministry of Labor and Social Security</h2>
  <p class="d">Şu anda yurt dışında olan yukarıda Adı, Soyadı, Cinsiyeti, Uyruğu. Pasaport Numarası ve Mesleği yazılı yabancı uyruklu kişileri işyerimde istihdam etmek<br>istediğimi ve KKTC'ye girişlerinden itibaren en geç 15 gün içerisinde Çalışma İzni işlemlerini başlatacağımı ve 30 gün içerisinde tamamlayacağımı beyan<br>ederim. / I declare that I want to employ the foreign national whose information is written above, who is currently abroad, in my workplace, and that I wil<br>initiate the Work Permit procedures within 15 days at the latest after entering the TRNC and wil complete it within 30 days.</p>
  <table class="emp"><colgroup><col style="width:189px"><col style="width:77px"><col style="width:226px"><col></colgroup>
  <tr><th>İşveren<br>Employer</th><td>TechCorp</td><th>Çalışma D. Tescil No:<br>Labor Department Registration Number:</th><td>LD001</td></tr>
  <tr><th>İşveren Temsilcisi (varsa):<br>Employer Representative (if any):</th><td>Emily Smith</td><th>Çalışma İzin Süresi:<br>Work Permit Duration:</th><td>1 year</td></tr>
  <tr><th>Başvuru Tarihi<br>Application Date</th><td>01.06.2024</td><th></th><td></td></tr></table>
  <h2>Bakanlık Onayı / Ministry Approval</h2>
  <table class="last"><tr><td>Yukarıdaki müracaat değerlendirilmiş ve formda adı yazılı işverenin yurt dışından iş gücü getirme talebi uygun bulunmuştur. The above application</td></tr></table>
  <span class="stamp">ONAYLANDI</span>`);

define('pdf-viewer', `
  :host{display:flex;min-width:0;min-height:0;flex:1;margin:0 0 4px 3px;border:1px solid #dedede;border-radius:8px;overflow:hidden;background:#e6e6e6;border-width:0 0 1px 1px;box-shadow:0 0 2px #bbb}
  main{flex:1;min-width:0;display:flex;flex-direction:column}
  .doc{flex:1;min-height:0;overflow:hidden;display:flex;flex-direction:column;align-items:center;padding-top:7px}
  pdf-page{flex:none;height:924px}
  .sb{width:15px;flex:none;background:#fcfcfc;display:flex;flex-direction:column;align-items:center;padding:10px 0}
  .a{border:4px solid transparent;border-top:0;border-bottom:5px solid #858585}
  .b{border:4px solid transparent;border-bottom:0;border-top:5px solid #858585;margin-top:auto}
  .th{width:9px;height:36%;border-radius:5px;background:#8b8b8b;margin-top:8px}`,
  `<main><pdf-toolbar></pdf-toolbar><div class="doc"><pdf-page></pdf-page></div></main><div class="sb"><span class="a"></span><span class="th"></span><span class="b"></span></div>`);

define('side-bar', `
  :host{display:flex;flex-direction:column;align-items:center;gap:16px;width:44px;flex:none;padding:10px 0;color:#222}
  hr{width:28px;border:0;height:1px;background:#cdcdcd;margin:4px 0}
  .b{margin-top:auto;display:flex;flex-direction:column;align-items:center;gap:6px}`,
  ['sideSearch:Search', 'tag:Shopping', 'tools:Tools', 'games:Games', 'm365:Microsoft 365', 'outlook:Outlook', 'plane:Drop'].map(s => `<icon-button icon="${s.split(':')[0]}" label="${s.split(':')[1]}"></icon-button>`).join('') +
  `<hr><icon-button icon="plusSmall" label="Customize"></icon-button><div class="b"><hr><icon-button icon="gear" label="Sidebar settings"></icon-button></div>`);

define('task-bar', `
  :host{display:flex;height:40px;flex:none;background:linear-gradient(90deg,#213840,#1f3343 60%,#1a2842);color:#fff;align-items:stretch}
  icon-button{height:40px}
  .st{width:48px}
  label{display:flex;align-items:center;flex:0 1 343px;min-width:0;background:#f2f2f2;border:1px solid #b9b9b9;color:#222;padding:0 9px 0 11px}
  input{all:unset;flex:1;min-width:0;font:14px "Open Sans",sans-serif;margin-left:11px}
  input::placeholder{color:#3b3b3b;opacity:1}
  .tv{width:52px}
  .apps{display:flex;gap:1px}
  .apps icon-button{width:48px;border-bottom:2px solid transparent;position:relative;box-sizing:border-box}
  .run::after{content:"";position:absolute;left:4px;right:4px;bottom:-2px;height:2px;background:#76b9ed}
  .apps .on{background:#4d626c;border-color:#76b9ed}
  .tray{display:flex;align-items:center;margin-left:auto;flex:none}
  .tray button{all:unset;text-align:center;line-height:18px;white-space:nowrap}
  .tray button.w{display:flex;align-items:center;gap:7px;margin-right:20px;font-size:13px}
  .tray button.lang{margin:0 15px 0 5px}
  .tray .nt{margin:0 15px 0 17px}
  .sd{width:5px;height:40px;border-left:1px solid #6b788a}`,
  `<icon-button class="st" icon="start" label="Start"></icon-button>
  <label><ui-icon name="winSearch"></ui-icon><input type="text" aria-label="Search" placeholder="Type here to search"><ui-icon name="lighthouse"></ui-icon></label>
  <icon-button class="tv" icon="taskView" label="Task view"></icon-button>
  <div class="apps"><icon-button class="on" icon="edge" label="Microsoft Edge"></icon-button><icon-button class="run" icon="folder" label="File Explorer"></icon-button><icon-button icon="store" label="Microsoft Store"></icon-button><icon-button icon="mail" label="Mail"></icon-button><icon-button class="run" icon="chrome" label="Chrome"></icon-button><icon-button class="run" icon="transfer" label="File transfer"></icon-button><icon-button class="run" icon="whatsapp" label="WhatsApp"></icon-button><icon-button class="run" icon="git" label="Git"></icon-button><icon-button class="run" icon="xampp" label="XAMPP"></icon-button><icon-button class="run" icon="vscode" label="Visual Studio Code"></icon-button></div>
  <div class="tray"><button class="w"><ui-icon name="weather"></ui-icon>82°F</button><icon-button icon="up" label="Hidden icons"></icon-button><icon-button icon="camera" label="Camera"></icon-button><icon-button icon="battery" label="Battery"></icon-button><icon-button icon="wifi" label="Network"></icon-button><icon-button icon="sound" label="Volume"></icon-button><button class="lang">ENG<br>US</button><button>1:11 PM<br>7/1/2024</button><icon-button class="nt" icon="notif" label="Notifications"></icon-button><span class="sd"></span></div>`);

define('browser-desktop', `
  :host{display:flex;flex-direction:column;height:100vh;overflow:hidden}
  .m{display:flex;flex:1;min-height:0}`,
  `<tab-strip></tab-strip><address-bar></address-bar><div class="m"><pdf-viewer></pdf-viewer><side-bar></side-bar></div><task-bar></task-bar>`);
</script>
</body>
</html>
